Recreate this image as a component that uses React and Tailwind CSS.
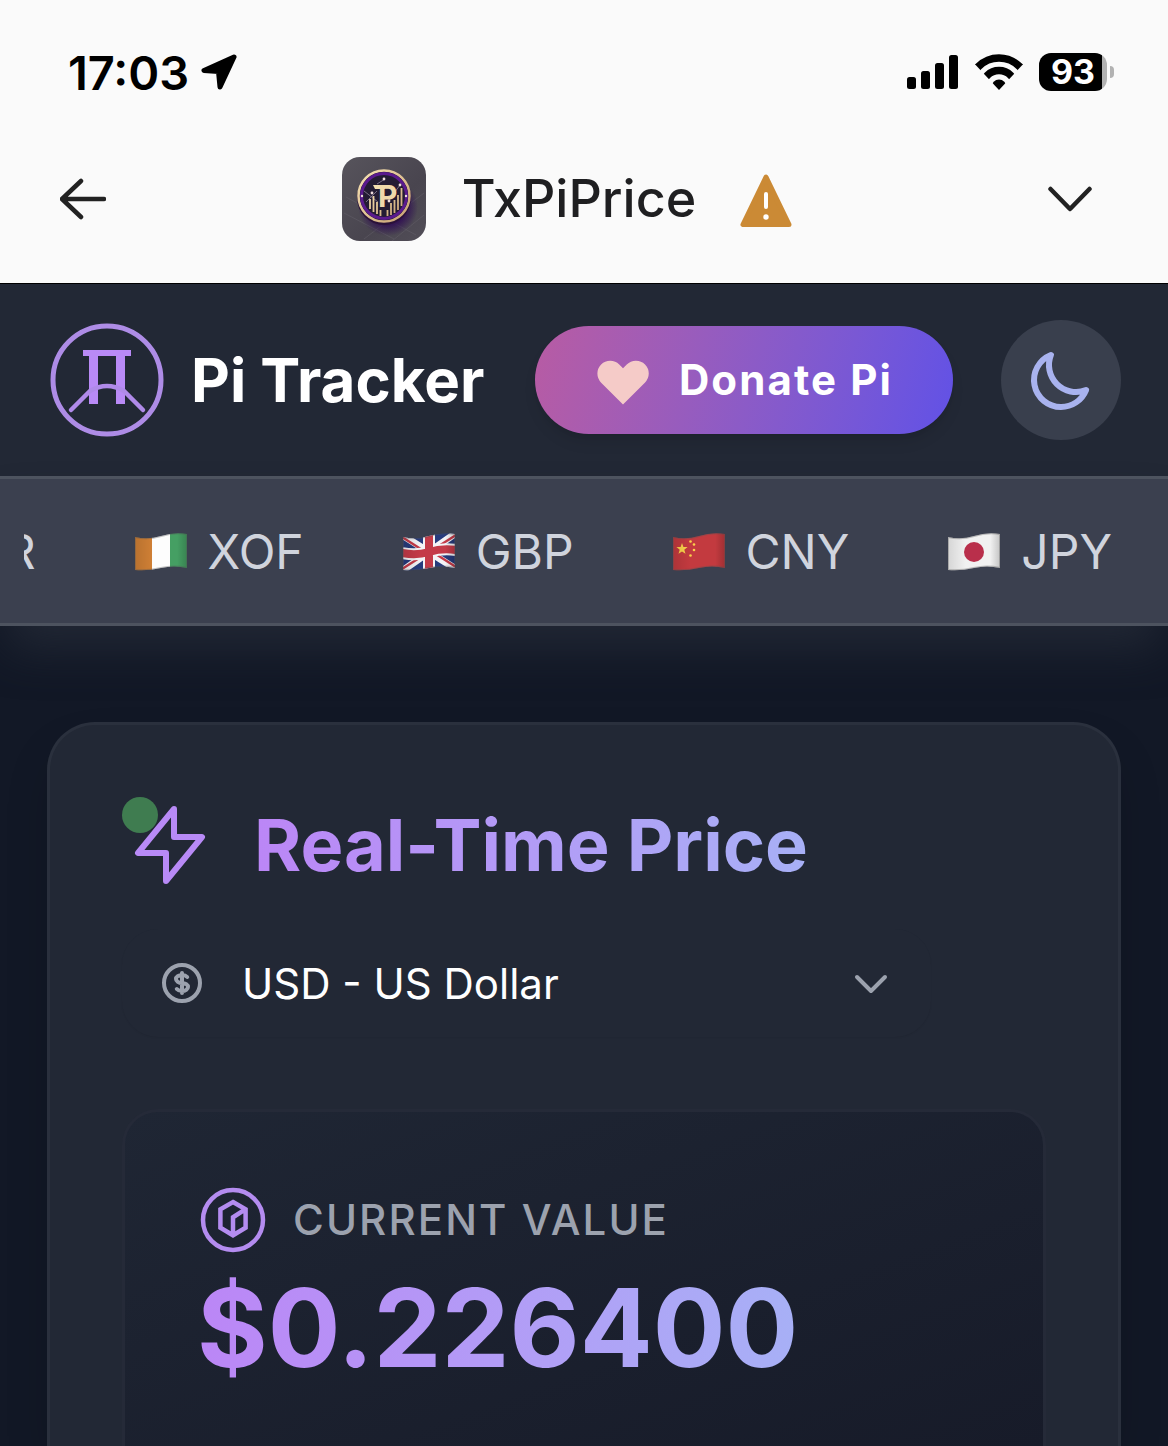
import { useState } from 'react';

const TICKER = [
  { code: 'XOF', Flag: IvoryCoastFlag },
  { code: 'GBP', Flag: BritainFlag },
  { code: 'CNY', Flag: ChinaFlag },
  { code: 'JPY', Flag: JapanFlag },
];

const WAVE = 'M1 6 Q14 9 27 5 T53 3 V37 Q40 34 27 37 T1 39 Z';

function FlagShape({ id, children }) {
  return (
    <svg viewBox="0 0 54 42" className="h-[42px] w-[54px] shrink-0" aria-hidden="true">
      <defs>
        <clipPath id={id}>
          <path d={WAVE} />
        </clipPath>
        <linearGradient id={`${id}-shade`}>
          <stop offset="0" stopColor="#000" stopOpacity="0.12" />
          <stop offset="0.35" stopColor="#000" stopOpacity="0" />
          <stop offset="0.8" stopColor="#000" stopOpacity="0" />
          <stop offset="1" stopColor="#000" stopOpacity="0.2" />
        </linearGradient>
      </defs>
      <g clipPath={`url(#${id})`}>
        {children}
        <rect width="54" height="42" fill={`url(#${id}-shade)`} />
        <path d={WAVE} fill="none" stroke="#555" strokeOpacity="0.35" strokeWidth="2" />
      </g>
    </svg>
  );
}

function IvoryCoastFlag() {
  return (
    <FlagShape id="flag-ci">
      <rect width="18" height="42" fill="#d08035" />
      <rect x="18" width="18" height="42" fill="#fdfdfd" />
      <rect x="36" width="18" height="42" fill="#459f63" />
    </FlagShape>
  );
}

function BritainFlag() {
  return (
    <FlagShape id="flag-gb">
      <rect width="54" height="42" fill="#273b7c" />
      <path d="M0 4 L54 38 M0 40 L54 2" stroke="#f3f3f6" strokeWidth="7" />
      <path d="M0 6 L25 22 M54 36 L29 20 M0 38 L25 22 M54 4 L29 20" stroke="#c43a48" strokeWidth="2.5" />
      <path d="M0 22 Q14 25 27 21 T54 19 M27 0 V42" fill="none" stroke="#f3f3f6" strokeWidth="12" />
      <path d="M0 22 Q14 25 27 21 T54 19 M27 0 V42" fill="none" stroke="#c43a48" strokeWidth="8" />
    </FlagShape>
  );
}

function ChinaFlag() {
  return (
    <FlagShape id="flag-cn">
      <rect width="54" height="42" fill="#c33a3f" />
      <path d="M10 12l1.4 4 4.2.1-3.3 2.6 1.2 4.1-3.5-2.4-3.5 2.4 1.2-4.1L4.4 16.1l4.2-.1z" fill="#fbd24b" />
      <g fill="#fbd24b">
        <circle cx="18.5" cy="10.500" r="1.3" />
        <circle cx="22" cy="13.5" r="1.3" />
        <circle cx="22" cy="19" r="1.3" />
        <circle cx="18.5" cy="24.5" r="1.3" />
      </g>
    </FlagShape>
  );
}

function JapanFlag() {
  return (
    <FlagShape id="flag-jp">
      <rect width="54" height="42" fill="#f1f1f1" />
      <circle cx="27" cy="21" r="10" fill="#b92f4b" />
    </FlagShape>
  );
}

function AppIcon() {
  return (
    <svg viewBox="0 0 84 84" className="size-[84px]" role="img" aria-label="TxPiPrice app icon">
      <defs>
        <linearGradient id="app-bg" x1="0" y1="0" x2="1" y2="1">
          <stop offset="0" stopColor="#57545c" />
          <stop offset="0.6" stopColor="#49454f" />
          <stop offset="1" stopColor="#514d57" />
        </linearGradient>
        <radialGradient id="app-glow">
          <stop offset="0.5" stopColor="#2c0753" />
          <stop offset="1" stopColor="#2c0753" stopOpacity="0" />
        </radialGradient>
        <linearGradient id="gold" x1="0" y1="0" x2="1" y2="1">
          <stop offset="0" stopColor="#f6e3b4" />
          <stop offset="1" stopColor="#c79f72" />
        </linearGradient>
      </defs>
      <rect width="84" height="84" rx="18" fill="url(#app-bg)" />
      <path d="M2 56l50 26M4 40l70 38M50 84l32-26M22 82l60-46" stroke="#65606a" strokeWidth="0.5" />
      <ellipse cx="46" cy="50" rx="30" ry="29" fill="url(#app-glow)" />
      <circle cx="42" cy="41" r="27" fill="#2a1138" />
      <circle cx="42" cy="39" r="25.5" fill="#241c33" stroke="url(#gold)" strokeWidth="2.5" />
      <circle cx="42" cy="39" r="22.5" fill="none" stroke="#5b1a8e" strokeWidth="3" />
      <path d="M22 34l14 11M24 45l11-11M43 22l-8 5M58 28L47 43" stroke="#8e8499" strokeWidth="0.8" />
      <path
        d="M28 42v10M31.500 39v16M35 45v12M38.500 53v6M45.500 53v6M49 46v12M52.500 43v13M56 38v15M59.500 31v18"
        stroke="url(#gold)"
        strokeWidth="1.8"
      />
      <g fill="#f0dede">
        <circle cx="42" cy="22" r="1.4" />
        <circle cx="58" cy="28" r="1.4" />
        <circle cx="30" cy="36" r="1.4" />
        <circle cx="47" cy="44" r="1.4" />
        <circle cx="20" cy="39" r="1.2" />
        <circle cx="64" cy="39" r="1.2" />
      </g>
      <path d="M31 28h12v4h-10z" fill="#f3deb0" />
      <text x="36" y="50" fontFamily="Inter, sans-serif" fontWeight="700" fontSize="30" fill="#efd8aa">P</text>
    </svg>
  );
}

function StatusBar() {
  return (
    <div className="flex h-[115px] items-center justify-between pt-[29px] pr-[54px] pl-[68px] text-black">
      <div className="flex items-center gap-3">
        <span className="text-[47px] leading-none font-semibold">17:03</span>
        <svg viewBox="0 0 36 36" className="size-9" aria-hidden="true">
          <path d="M33 3 3 16.5 17.5 17.5 19 33Z" fill="#000" stroke="#000" strokeWidth="5" strokeLinejoin="round" />
        </svg>
      </div>
      <div className="flex items-center gap-4">
        <svg viewBox="0 0 52 36" className="h-9 w-[52px]" aria-hidden="true">
          <rect x="0" y="23" width="9" height="12" rx="2.5" />
          <rect x="14" y="17" width="9" height="18" rx="2.5" />
          <rect x="28" y="9" width="9" height="26" rx="2.5" />
          <rect x="42" y="1" width="9" height="34" rx="2.5" />
        </svg>
        <svg viewBox="0 0 48 36" className="h-9 w-12" aria-hidden="true">
          <clipPath id="wifi-wedge">
            <path d="M24 36 -4 6V-5H52V6Z" />
          </clipPath>
          <g clipPath="url(#wifi-wedge)">
            <circle cx="24" cy="33" r="29" fill="none" stroke="#000" strokeWidth="7.5" />
            <circle cx="24" cy="33" r="16.5" fill="none" stroke="#000" strokeWidth="7.5" />
            <circle cx="24" cy="33" r="7.5" />
          </g>
        </svg>
        <div className="flex items-center gap-[3px]">
          <div className="flex h-[38px] w-[68px] items-center justify-center rounded-xl bg-linear-to-r from-black from-93% to-[#b2b2b2] to-93%">
            <span className="text-[34px] leading-none font-bold text-white">93</span>
          </div>
          <span className="h-3 w-1 rounded-r-full bg-[#b2b2b2]" />
        </div>
      </div>
    </div>
  );
}

function AppBar() {
  return (
    <div className="flex h-[168px] items-center pr-[76px] pl-[60px]">
      <button type="button" aria-label="Back">
        <svg viewBox="0 0 46 42" className="h-[42px] w-[46px]" fill="none" stroke="#222" strokeWidth="4.5" strokeLinecap="round" strokeLinejoin="round">
          <path d="M44 21H2M21 3 2 21 21 39" />
        </svg>
      </button>
      <div className="flex flex-1 items-center justify-center pr-5">
        <AppIcon />
        <h1 className="ml-9 text-[52px] leading-none font-medium text-[#1f1f21]">TxPiPrice</h1>
        <svg viewBox="0 0 52 54" className="mt-1 ml-11 h-[54px] w-[52px]" role="img" aria-label="Warning">
          <path d="M26 3 3 50.5H49Z" fill="#cb8a35" stroke="#cb8a35" strokeWidth="5" strokeLinejoin="round" />
          <path d="M26 20V33" stroke="#fff" strokeWidth="4" strokeLinecap="round" />
          <circle cx="26" cy="43" r="2.7" fill="#fff" />
        </svg>
      </div>
      <button type="button" aria-label="More">
        <svg viewBox="0 0 44 26" className="h-[26px] w-11" fill="none" stroke="#222" strokeWidth="4.5" strokeLinecap="round" strokeLinejoin="round">
          <path d="M2.5 3 22 23 41.5 3" />
        </svg>
      </button>
    </div>
  );
}

function Header() {
  return (
    <header className="flex items-center border-t border-black bg-[#222835] px-[47px] py-9">
      <svg viewBox="0 0 120 120" className="size-[120px] shrink-0" role="img" aria-label="Pi Tracker logo">
        <circle cx="60" cy="60" r="54" fill="none" stroke="#ae8ce6" strokeWidth="5" />
        <path d="M36 30H84V36H78V84H69V36H51V84H42V36H36Z" fill="#b98af6" />
        <path d="M24 90 43 71Q60 61 77 71L96 90" fill="none" stroke="#b08ae9" strokeWidth="4.5" strokeLinecap="round" />
      </svg>
      <span className="ml-6 text-[60px] leading-none font-bold whitespace-nowrap text-white">Pi Tracker</span>
      <button
        type="button"
        className="ml-auto flex h-[108px] items-center gap-6 rounded-full bg-linear-105 from-[#b85ba3] to-[#6151e6] pr-15 pl-14 shadow-lg"
      >
        <svg viewBox="0 0 20 20" className="size-16" fill="#f5cbc8" aria-hidden="true">
          <path d="M3.172 5.172a4 4 0 015.656 0L10 6.343l1.172-1.171a4 4 0 115.656 5.656L10 17.657l-6.828-6.829a4 4 0 010-5.656z" />
        </svg>
        <span className="text-[42px] leading-none font-bold tracking-wider whitespace-nowrap text-white">Donate Pi</span>
      </button>
      <button
        type="button"
        aria-label="Toggle dark mode"
        className="ml-12 flex size-[120px] shrink-0 items-center justify-center rounded-full bg-[#393f4d]"
      >
        <svg viewBox="0 0 24 24" className="size-[72px]" fill="none" stroke="#a9b3ef" strokeWidth="2" strokeLinecap="round" strokeLinejoin="round">
          <path d="M20.354 15.354A9 9 0 018.646 3.646 9.003 9.003 0 0012 21a9.003 9.003 0 008.354-5.646z" />
        </svg>
      </button>
    </header>
  );
}

function Ticker() {
  return (
    <div className="border-y-[3px] border-[#4d535f] bg-[#3b404f] px-6 shadow-[0_30px_45px_-9px_#222835]">
      <ul className="flex h-36 items-center justify-end gap-[98px] overflow-hidden pt-0.5 pr-8 text-[48px] leading-none text-[#d0d4dd]">
        <li>R</li>
        {TICKER.map(({ code, Flag }) => (
          <li key={code} className="flex items-center gap-5">
            <Flag />
            {code}
          </li>
        ))}
      </ul>
    </div>
  );
}

function CurrencySelect() {
  const [currency, setCurrency] = useState('USD');

  return (
    <div className="relative mt-9 w-7/8">
      <svg
        viewBox="0 0 24 24"
        className="pointer-events-none absolute inset-y-0 left-9 my-auto size-12"
        fill="none"
        stroke="#9ca2ae"
        strokeWidth="2"
        strokeLinecap="round"
        strokeLinejoin="round"
      >
        <path d="M12 8c-1.657 0-3 .895-3 2s1.343 2 3 2 3 .895 3 2-1.343 2-3 2m0-8c1.11 0 2.08.402 2.599 1M12 8V7m0 1v8m0 0v1m0-1c-1.11 0-2.08-.402-2.599-1M21 12a9 9 0 11-18 0 9 9 0 0118 0z" />
      </svg>
      <select
        aria-label="Currency"
        value={currency}
        onChange={(e) => setCurrency(e.target.value)}
        className="h-[108px] w-full appearance-none rounded-[36px] bg-[#222835] pr-24 pl-30 text-[42px] text-white shadow-xs"
      >
        <option value="USD">USD - US Dollar</option>
      </select>
      <svg
        viewBox="0 0 24 24"
        className="pointer-events-none absolute inset-y-0 right-9 my-auto size-12"
        fill="none"
        stroke="#9ca2ae"
        strokeWidth="2"
        strokeLinecap="round"
        strokeLinejoin="round"
      >
        <path d="M19 9l-7 7-7-7" />
      </svg>
    </div>
  );
}

function PriceCard() {
  return (
    <section className="flex flex-1 flex-col rounded-t-[48px] border-[3px] border-b-0 border-[#2a303d] bg-[#222835] px-[72px] pt-[72px] shadow-2xl">
      <div className="flex items-center gap-9">
        <div className="relative size-24">
          <span className="absolute top-0 left-0 size-9 rounded-full bg-[#3f7c50]" />
          <svg viewBox="0 0 24 24" className="relative size-24" fill="none" stroke="#b88af6" strokeWidth="1.5" strokeLinecap="round" strokeLinejoin="round">
            <path d="M13 10V3L4 14h7v7l9-11h-7z" />
          </svg>
        </div>
        <h2 className="bg-linear-to-r from-[#bb86f6] to-[#a7b0f6] bg-clip-text text-[72px] leading-24 font-bold text-transparent">
          Real-Time Price
        </h2>
      </div>

      <CurrencySelect />

      <div className="mt-[72px] flex flex-1 flex-col items-start rounded-t-[36px] border-[3px] border-b-0 border-[#252a38] bg-linear-to-br from-[#1f2634] to-[#171b29] px-[72px] pt-[72px]">
        <div className="flex items-center gap-6">
          <svg viewBox="0 0 24 24" className="size-[72px]" fill="none" stroke="#b48cf0" strokeWidth="1.5">
            <circle cx="12" cy="12" r="10" />
            <path d="M12 6 16.2 8.4V14.6L12 17.1 7.8 14.6V8.4ZM16.2 8.4 12 11.1V17" />
          </svg>
          <span className="text-[42px] leading-none font-medium tracking-wider text-[#9ca2ae] uppercase">Current Value</span>
        </div>
        <p className="mt-[18px] bg-linear-to-r from-[#bb86f6] to-[#a7b0f6] bg-clip-text text-[108px] leading-[108px] font-bold text-transparent">
          $0.226400
        </p>
      </div>
    </section>
  );
}

export default function App() {
  return (
    <div className="flex min-h-screen flex-col bg-[#121826] font-['Inter',sans-serif]">
      <div className="bg-[#fafafa]">
        <StatusBar />
        <AppBar />
      </div>
      <Header />
      <Ticker />
      <main className="flex flex-1 flex-col px-[47px] pt-24">
        <PriceCard />
      </main>
    </div>
  );
}
